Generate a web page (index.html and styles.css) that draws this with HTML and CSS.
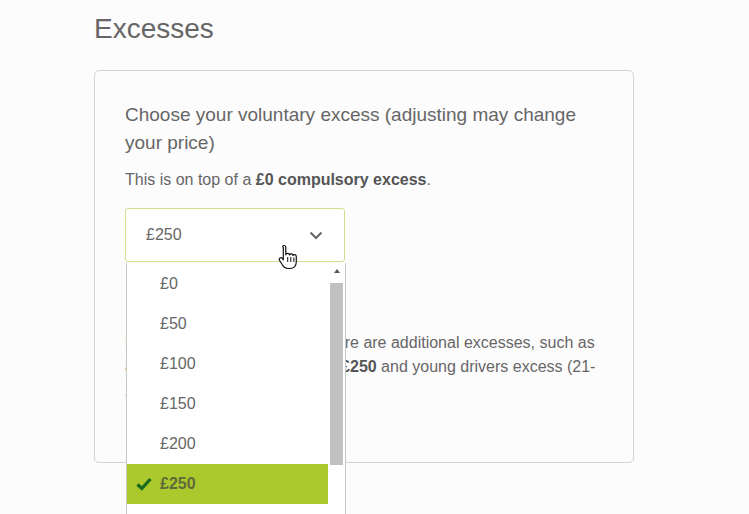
FILE: index.html
```html
<!DOCTYPE html>
<html>
<head lang="en">
    <meta charset="UTF-8">
    <title>Excesses</title>
    <link rel="stylesheet" href="styles.css">
</head>
<body>
    <div class="page">
        <h2 class="title">Excesses</h2>
        <div class="card">
            <p class="question">Choose your voluntary excess (adjusting may change your price)</p>
            <p class="note">This is on top of a <b>£0 compulsory excess</b>.</p>
            <div class="select-wrap">
                <div class="select">
                    <span>£250</span>
                    <svg class="chevron" width="14" height="9" viewBox="0 0 14 9"><path d="M1.5 1.5 L7 7 L12.5 1.5" fill="none" stroke="#666" stroke-width="2"/></svg>
                </div>
                <svg class="cursor" width="20" height="26" viewBox="0 0 20 26">
                    <path d="M6 1.5c1.1 0 1.8.8 1.8 1.8v7.4c.3-.9 1-1.4 1.9-1.4 1 0 1.7.7 1.8 1.6.3-.6.9-1 1.7-1 1 0 1.7.7 1.8 1.6.3-.5.9-.8 1.5-.8 1.1 0 1.8.8 1.8 1.8v5.3c0 3.8-2.5 6.7-6.3 6.7H10c-2.4 0-3.9-1-5.2-3L1.6 16.5c-.6-.9-.4-2 .4-2.5.8-.5 1.8-.3 2.4.5l.9 1.3V3.3C4.2 2.3 5 1.5 6 1.5z" fill="#fff" stroke="#111" stroke-width="1.2" stroke-linejoin="round"/>
                    <path d="M9.7 13v5M12.8 13v5M15.9 13.5v4.5" stroke="#111" stroke-width="1" fill="none"/>
                </svg>
                <div class="dropdown">
                    <ul class="options">
                        <li>£0</li>
                        <li>£50</li>
                        <li>£100</li>
                        <li>£150</li>
                        <li>£200</li>
                        <li class="current">
                            <svg class="tick" width="16" height="14" viewBox="0 0 16 14"><path d="M1.5 7.5 L5.8 11.5 L14.5 2" fill="none" stroke="#176a1e" stroke-width="3.2"/></svg>
                            £250
                        </li>
                        <li>£500</li>
                    </ul>
                    <div class="scrollbar">
                        <div class="arrow"></div>
                        <div class="thumb"></div>
                    </div>
                </div>
            </div>
            <p class="info">Please note that in addition there are additional excesses, such as<br>a fire or theft claims excess of <b>£250</b> and young drivers excess (21-<br>24).</p>
        </div>
    </div>
</body>
</html>
```

FILE: styles.css
```css
* {
    margin: 0;
    padding: 0;
}
body {
    background-color: #fdfcfd;
    font-family: "Liberation Sans", Arial, sans-serif;
    color: #666;
}
.page {
    padding-left: 94px;
    padding-bottom: 80px;
    width: 540px;
}
.title {
    font-size: 28px;
    font-weight: normal;
    line-height: 32px;
    margin-top: 13px;
    margin-bottom: 25px;
    color: #666;
}
.card {
    border: 1px solid #d4d4d4;
    border-radius: 5px;
    padding: 30px 30px 0 30px;
    box-sizing: border-box;
    height: 393px;
}
.question {
    font-size: 19px;
    line-height: 28px;
}
.note {
    font-size: 16px;
    line-height: 20px;
    margin-top: 13px;
}
.note b {
    color: #555;
}
.select-wrap {
    position: relative;
    margin-top: 18px;
    width: 220px;
}
.select {
    height: 54px;
    box-sizing: border-box;
    border: 1px solid #cfe08f;
    border-radius: 3px;
    display: flex;
    align-items: center;
    justify-content: space-between;
    padding: 0 21px 0 20px;
    font-size: 16px;
    background-color: #fff;
}
.cursor {
    position: absolute;
    left: 153px;
    top: 36px;
    z-index: 3;
}
.dropdown {
    position: absolute;
    left: 1px;
    top: 55px;
    width: 220px;
    height: 260px;
    box-sizing: border-box;
    border-left: 1px solid #c8c8c8;
    border-right: 1px solid #c8c8c8;
    background-color: #fff;
    display: flex;
    z-index: 2;
}
.options {
    list-style-type: none;
    flex: 1;
    padding-top: 1px;
}
.options li {
    height: 40px;
    line-height: 40px;
    padding-left: 33px;
    font-size: 16px;
    position: relative;
}
.options li.current {
    background-color: #abc92c;
    font-weight: bold;
    color: #5f6a3a;
}
.tick {
    position: absolute;
    left: 9px;
    top: 13px;
}
.scrollbar {
    width: 17px;
    padding: 0 2px;
    box-sizing: border-box;
}
.arrow {
    width: 0;
    height: 0;
    margin: 6px auto 0;
    border-left: 3px solid transparent;
    border-right: 3px solid transparent;
    border-bottom: 4px solid #555;
}
.thumb {
    margin-top: 10px;
    height: 182px;
    background-color: #c1c1c1;
}
.info {
    font-size: 16px;
    line-height: 24px;
    margin-top: 69px;
}
.info b {
    color: #555;
}
```
